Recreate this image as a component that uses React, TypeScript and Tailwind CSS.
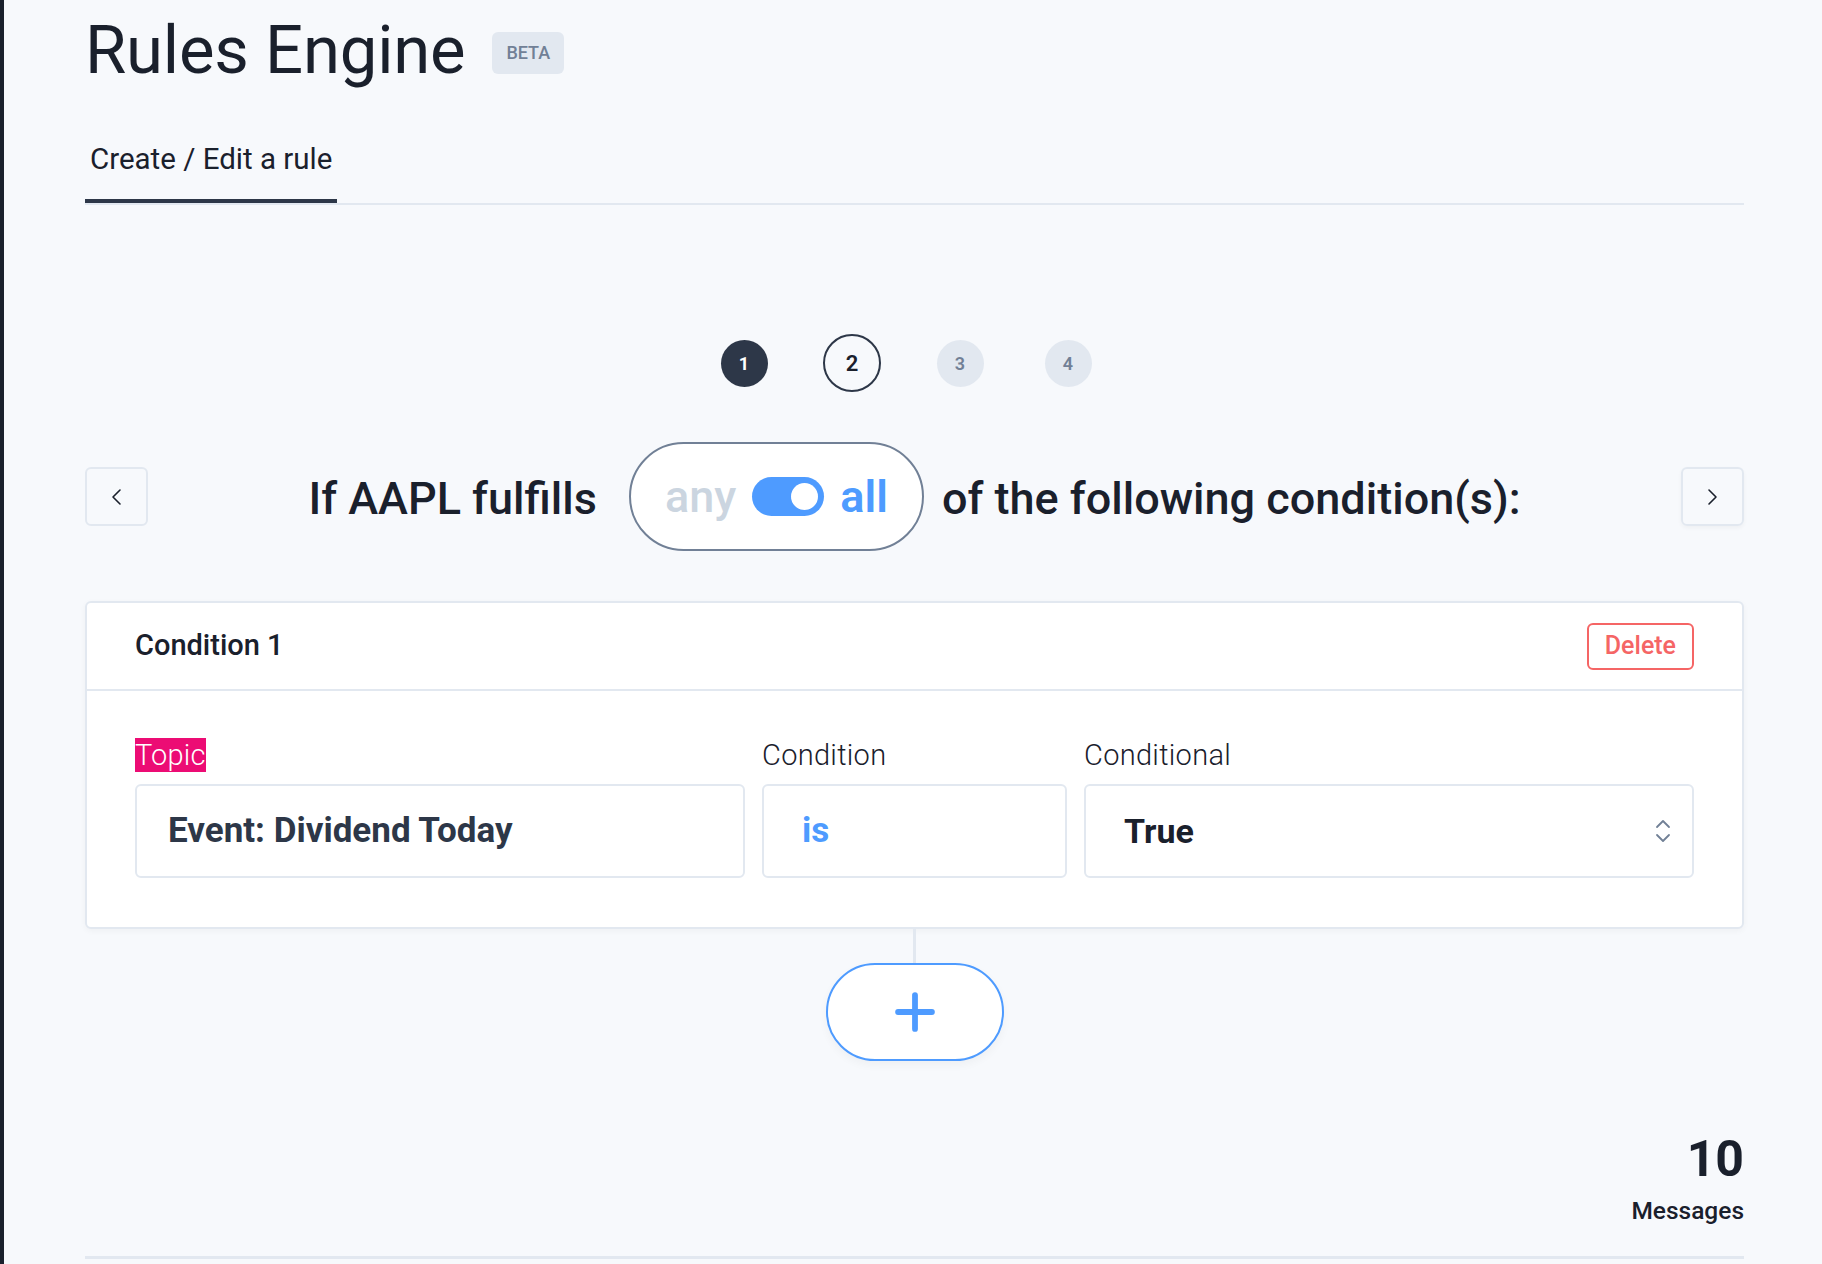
import { Plus } from 'lucide-react';

function Chevron({ dir }: { dir: 'left' | 'right' }) {
  return (
    <svg width="14" height="24" viewBox="0 0 14 24" fill="none" stroke="#1a202c" strokeWidth="1.6" strokeLinecap="round" strokeLinejoin="round">
      {dir === 'left' ? <path d="M10 5 L3 12 L10 19" /> : <path d="M4 5 L11 12 L4 19" />}
    </svg>
  );
}

function UpDown() {
  return (
    <svg width="18" height="26" viewBox="0 0 18 26" fill="none" stroke="#718096" strokeWidth="1.8" strokeLinecap="round" strokeLinejoin="round">
      <path d="M3 9 L9 3 L15 9" />
      <path d="M3 17 L9 23 L15 17" />
    </svg>
  );
}

function Step({ n, state }: { n: number; state: 'done' | 'current' | 'todo' }) {
  if (state === 'done') {
    return (
      <div className="flex h-[47px] w-[47px] items-center justify-center rounded-full bg-[#2d3748] text-[18px] font-bold text-white">
        {n}
      </div>
    );
  }
  if (state === 'current') {
    return (
      <div className="flex h-[58px] w-[58px] items-center justify-center rounded-full border-2 border-[#2d3748] text-[22px] font-semibold text-[#1a202c]">
        {n}
      </div>
    );
  }
  return (
    <div className="flex h-[47px] w-[47px] items-center justify-center rounded-full bg-[#e2e8f0] text-[18px] font-semibold text-[#718096]">
      {n}
    </div>
  );
}

export default function App() {
  const steps: { n: number; state: 'done' | 'current' | 'todo' }[] = [
    { n: 1, state: 'done' },
    { n: 2, state: 'current' },
    { n: 3, state: 'todo' },
    { n: 4, state: 'todo' }
  ];

  return (
    <div className="flex min-h-screen bg-[#f7f9fc] font-['Roboto',sans-serif] text-[#1a202c]">
      <div className="w-[4px] shrink-0 bg-[#1a202c]" />
      <div className="flex flex-1 flex-col pl-[81px] pr-[78px]">
        <div className="flex items-center gap-[27px] pt-[12px]">
          <h1 className="text-[67px] font-normal leading-[76px] tracking-[-0.2px] text-[#1a202c]">Rules Engine</h1>
          <span className="mt-[6px] rounded-[6px] bg-[#e2e8f0] px-[14px] py-[10px] text-[18px] font-medium leading-[22px] text-[#718096]">
            BETA
          </span>
        </div>

        <div className="mt-[54px] flex border-b-2 border-[#e2e8f0]">
          <div className="border-b-4 border-[#2d3748] px-[5px] pb-[23px] text-[29.5px] font-normal leading-[34px] text-[#1a202c]">
            Create / Edit a rule
          </div>
        </div>

        <div className="mt-[128px] flex h-[60px] items-center justify-center pr-[17px]">
          {steps.map(s => (
            <div key={s.n} className="flex w-[108px] justify-center">
              <Step n={s.n} state={s.state} />
            </div>
          ))}
        </div>

        <div className="mt-[49px] flex items-center justify-between">
          <button className="flex h-[59px] w-[63px] items-center justify-center rounded-[6px] border-2 border-[#e2e8f0]">
            <Chevron dir="left" />
          </button>
          <div className="flex items-center text-[45px] font-medium text-[#1a202c]">
            <span className="pt-[4px]">If AAPL fulfills</span>
            <div className="ml-[32px] flex h-[109px] w-[295px] items-center justify-center gap-[16px] rounded-full border-2 border-[#718096] bg-white">
              <span className="text-[#cbd5e0]">any</span>
              <span className="flex h-[39px] w-[72px] items-center justify-end rounded-full bg-[#4e9bff] pr-[6px]">
                <span className="h-[27px] w-[27px] rounded-full bg-white" />
              </span>
              <span className="font-semibold text-[#4e9bff]">all</span>
            </div>
            <span className="ml-[18px] pt-[4px]">of the following condition(s):</span>
          </div>
          <button className="flex h-[59px] w-[63px] items-center justify-center rounded-[6px] border-2 border-[#e2e8f0] shadow-[0_2px_4px_rgba(0,0,0,0.04)]">
            <Chevron dir="right" />
          </button>
        </div>

        <div className="mt-[50px] rounded-[6px] border-2 border-[#e2e8f0] bg-white shadow-[0_2px_6px_rgba(0,0,0,0.04)]">
          <div className="flex h-[88px] items-center justify-between border-b-2 border-[#e2e8f0] pl-[48px] pr-[48px]">
            <span className="text-[29px] font-medium text-[#1a202c]">Condition 1</span>
            <button className="h-[47px] rounded-[6px] border-2 border-[#f56565] px-[16px] text-[25px] font-medium text-[#f56565]">
              Delete
            </button>
          </div>
          <div className="grid grid-cols-[2fr_1fr_2fr] gap-x-[17px] px-[48px] pb-[49px] pt-[48px]">
            <div>
              <span className="bg-[#ec0c74] text-[29px] font-light leading-[32px] tracking-[0.2px] text-white">Topic</span>
            </div>
            <div className="text-[29px] font-light leading-[32px] tracking-[0.3px] text-[#1a202c]">Condition</div>
            <div className="text-[29px] font-light leading-[32px] tracking-[0.3px] text-[#1a202c]">Conditional</div>
            <div className="mt-[12px] flex h-[94px] items-center rounded-[6px] border-2 border-[#e2e8f0] px-[31px] text-[35px] font-bold text-[#2d3748]">
              Event: Dividend Today
            </div>
            <div className="mt-[12px] flex h-[94px] items-center rounded-[6px] border-2 border-[#e2e8f0] px-[38px] text-[35px] font-bold text-[#4e9bff]">
              is
            </div>
            <div className="mt-[12px] flex h-[94px] items-center justify-between rounded-[6px] border-2 border-[#e2e8f0] pl-[38px] pr-[20px] text-[34px] font-bold text-[#1a202c]">
              <span>True</span>
              <UpDown />
            </div>
          </div>
        </div>

        <div className="flex flex-col items-center">
          <div className="h-[34px] w-[3px] bg-[#e2e8f0]" />
          <button className="flex h-[98px] w-[178px] items-center justify-center rounded-full border-2 border-[#4e9bff] bg-white shadow-[0_4px_10px_rgba(0,0,0,0.04)]">
            <Plus size={58} strokeWidth={2.4} color="#4e9bff" />
          </button>
        </div>

        <div className="mt-[70px] flex flex-col items-end">
          <span className="text-[50px] font-bold leading-[56px] text-[#1a202c]">10</span>
          <span className="mt-[6px] text-[24.5px] font-medium text-[#1a202c]">Messages</span>
        </div>

        <div className="mt-[26px] h-[3px] bg-[#e2e8f0]" />
      </div>
    </div>
  );
}
